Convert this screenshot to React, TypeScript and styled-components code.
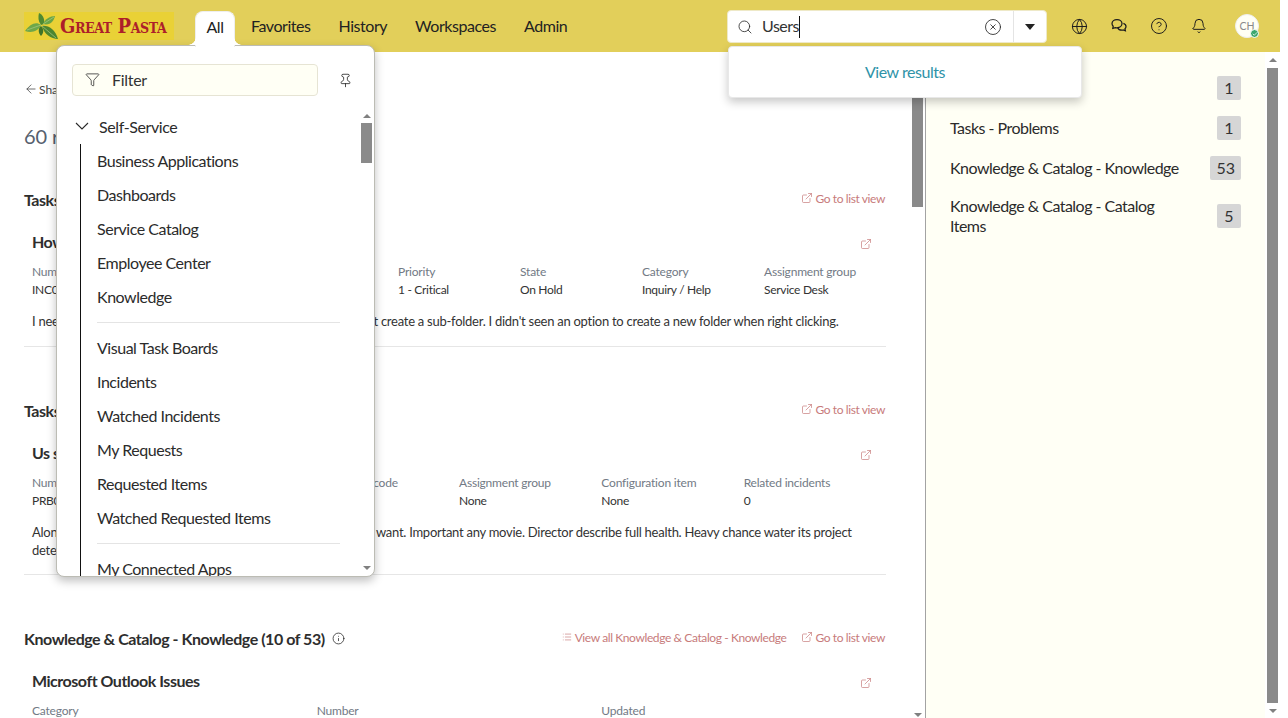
import React from "react";
import styled, { createGlobalStyle } from "styled-components";
import {
  ArrowLeft,
  Bell,
  Check,
  CircleHelp,
  CircleX,
  ExternalLink,
  Funnel,
  Globe,
  Info,
  List,
  Pin,
  Search,
} from "lucide-react";

const FONT = `"Lato", "Noto Sans", sans-serif`;

const Global = createGlobalStyle`
  html, body { margin: 0; padding: 0; background: #fff; height: 718px; overflow: hidden; }
  body { font-family: ${FONT}; color: #2b2b2b; }
  * { box-sizing: border-box; }
`;

const Page = styled.div`
  position: relative;
  width: 1280px;
  height: 718px;
  overflow: hidden;
  display: flex;
  flex-direction: column;
`;

const Header = styled.header`
  height: 52px;
  flex: none;
  background: #e2cf5a;
  display: flex;
  align-items: flex-start;
  padding: 11px 0 0 24px;
`;

const Logo = styled.div`
  width: 150px;
  height: 28px;
  margin-top: 1px;
  background: #e9d136;
  display: flex;
  align-items: center;
  padding-left: 1px;
  flex: none;
  overflow: hidden;
`;

const LeafArt = styled.svg`
  flex: none;
`;

const LogoText = styled.span`
  font-family: "DejaVu Serif Condensed", "DejaVu Serif", serif;
  font-stretch: condensed;
  font-weight: 700;
  font-size: 20px;
  font-variant: small-caps;
  letter-spacing: -0.42px;
  color: #ad1f2a;
  line-height: 28px;
  white-space: nowrap;
  margin-left: -1px;
`;

const Nav = styled.nav`
  display: flex;
  margin-left: 21px;
  height: 41px;
`;

const NavItem = styled.div<{ $active?: boolean }>`
  position: relative;
  height: ${(p) => (p.$active ? "36px" : "31px")};
  padding: 0 ${(p) => (p.$active ? "10.5px" : "14px")};
  margin-right: ${(p) => (p.$active ? "2px" : "0")};
  line-height: 29px;
  font-size: 16px;
  letter-spacing: -0.45px;
  color: #222;
  white-space: nowrap;
  border-radius: 8px 8px 0 0;
  background: ${(p) => (p.$active ? "#fff" : "transparent")};
  z-index: ${(p) => (p.$active ? 6 : 1)};
  border: ${(p) => (p.$active ? "1px solid #eeeeee" : "none")};
  border-bottom: none;
  ${(p) =>
    p.$active &&
    `
    &::before, &::after {
      content: "";
      position: absolute;
      bottom: 2px;
      width: 8px;
      height: 8px;
    }
    &::before {
      left: -8px;
      background: radial-gradient(circle at 0 0, transparent 7.5px, #fff 8px);
    }
    &::after {
      right: -8px;
      background: radial-gradient(circle at 100% 0, transparent 7.5px, #fff 8px);
    }
  `}
`;

const SearchBox = styled.div`
  position: absolute;
  left: 727px;
  top: 10px;
  width: 320px;
  height: 33px;
  background: #fff;
  border: 1px solid #eee9c8;
  border-radius: 4px;
  display: flex;
  align-items: center;
  padding-left: 9px;
  z-index: 8;
`;

const SearchText = styled.span`
  font-size: 16px;
  letter-spacing: -0.5px;
  margin-left: 9px;
  color: #333;
  padding-bottom: 2px;
  border-right: 1px solid #111;
  line-height: 20px;
`;

const ClearSlot = styled.span`
  margin-left: auto;
  display: flex;
  margin-right: 11px;
  color: #222;
`;

const Caret = styled.div`
  width: 33px;
  height: 31px;
  border-left: 1px solid #e4e4e4;
  display: flex;
  align-items: center;
  justify-content: center;
  &::after {
    content: "";
    border-left: 5px solid transparent;
    border-right: 5px solid transparent;
    border-top: 6px solid #222;
  }
`;

const Results = styled.div`
  position: absolute;
  left: 728px;
  top: 46px;
  width: 354px;
  height: 52px;
  padding-bottom: 2px;
  background: #fff;
  border-radius: 4px;
  border: 1px solid #e8e8e8;
  box-shadow: 0 4px 10px rgba(0, 0, 0, 0.22);
  display: flex;
  align-items: center;
  justify-content: center;
  font-size: 16px;
  letter-spacing: -0.45px;
  color: #2f93a8;
  z-index: 7;
`;

const IconBar = styled.div`
  position: absolute;
  top: 0;
  left: 1059px;
  height: 52px;
  display: flex;
  align-items: center;
  color: #1c1c1c;
`;

const IconSlot = styled.span`
  width: 40px;
  display: flex;
  justify-content: center;
`;

const Avatar = styled.div`
  position: relative;
  width: 24px;
  height: 24px;
  margin-left: 16px;
  border-radius: 50%;
  background: #fffff5;
  border: 1px solid #eee;
  color: #8a8a8a;
  font-size: 10.5px;
  display: flex;
  align-items: center;
  justify-content: center;
`;

const Presence = styled.span`
  position: absolute;
  right: -1px;
  bottom: -1px;
  width: 9px;
  height: 9px;
  border-radius: 50%;
  background: #3aa76d;
  border: 1px solid #fff;
  color: #fff;
  display: flex;
  align-items: center;
  justify-content: center;
`;

const Body = styled.div`
  flex: 1;
  display: flex;
  min-height: 0;
`;

const Main = styled.main`
  width: 926px;
  flex: none;
  display: flex;
  border-right: 1px solid #a3a3a3;
`;

const Content = styled.div`
  flex: 1;
  min-width: 0;
  overflow: hidden;
  padding: 28px 24px 0 24px;
`;

const Back = styled.div`
  height: 18px;
  display: flex;
  align-items: center;
  gap: 1px;
  font-size: 12px;
  color: #444;
`;

const Summary = styled.div`
  margin-top: 25px;
  height: 26px;
  line-height: 26px;
  font-size: 20px;
  color: #56606e;
  letter-spacing: -0.1px;
  white-space: nowrap;
`;

const SectionHead = styled.div<{ $top: number }>`
  margin-top: ${(p) => p.$top}px;
  height: 22px;
  display: flex;
  align-items: center;
`;

const SectionTitle = styled.h2`
  margin: 0;
  font-size: 16px;
  font-weight: 700;
  letter-spacing: -0.46px;
  color: #2e2e2e;
  white-space: nowrap;
`;

const InfoSlot = styled.span`
  display: flex;
  margin-left: 7px;
  color: #222;
`;

const Links = styled.div`
  margin-left: auto;
  display: flex;
  gap: 14px;
  padding: 0 1px 2px 0;
`;

const LinkItem = styled.span`
  display: flex;
  align-items: center;
  gap: 3px;
  font-size: 12px;
  letter-spacing: -0.4px;
  color: #c77b7b;
  white-space: nowrap;
`;

const Card = styled.article<{ $top: number }>`
  margin-top: ${(p) => p.$top}px;
  padding: 0 0 0 8px;
`;

const CardHead = styled.div`
  height: 22px;
  display: flex;
  align-items: center;
  justify-content: space-between;
  padding-right: 14px;
  color: #c77b7b;
`;

const CardTitle = styled.h3`
  margin: 0;
  font-size: 16px;
  font-weight: 700;
  letter-spacing: -0.48px;
  color: #2e2e2e;
  white-space: nowrap;
`;

const CardOpen = styled.span`
  display: flex;
  margin-top: 6px;
`;

const Fields = styled.div<{ $cols: number }>`
  display: grid;
  grid-template-columns: repeat(${(p) => p.$cols}, 1fr);
  margin-top: 11px;
`;

const Label = styled.div`
  font-size: 12px;
  line-height: 18px;
  letter-spacing: -0.2px;
  color: #727a85;
  white-space: nowrap;
`;

const Value = styled.div`
  font-size: 12px;
  line-height: 18px;
  letter-spacing: -0.3px;
  color: #333;
  white-space: nowrap;
`;

const Desc = styled.p`
  margin: 13px 0 0;
  font-size: 13px;
  line-height: 18px;
  letter-spacing: -0.26px;
  color: #333;
`;

const Rule = styled.hr<{ $top: number }>`
  border: none;
  border-top: 1px solid #e6e6e6;
  margin: ${(p) => p.$top}px 0 0;
`;

const Side = styled.aside`
  flex: 1;
  min-width: 0;
  display: flex;
`;

const Facets = styled.div`
  flex: 1;
  background: #fffff5;
  padding: 24px 24px 0;
  display: flex;
  flex-direction: column;
  gap: 16px;
`;

const Facet = styled.div`
  display: flex;
  align-items: center;
  justify-content: space-between;
  min-height: 24px;
`;

const FacetLabel = styled.span`
  font-size: 16px;
  line-height: 20px;
  letter-spacing: -0.52px;
  color: #2b2b2b;
  width: 236px;
  flex: none;
`;

const Badge = styled.span`
  min-width: 24px;
  height: 24px;
  padding: 0 6px;
  background: #d6d6d6;
  border-radius: 2px;
  font-size: 16px;
  color: #333;
  text-align: center;
  line-height: 24px;
`;

const Bar = styled.div<{ $pad: number }>`
  width: 15px;
  flex: none;
  display: flex;
  flex-direction: column;
  align-items: center;
  padding-bottom: ${(p) => p.$pad}px;
`;

const ArrowUp = styled.span`
  flex: none;
  margin-top: 6px;
  border-left: 4px solid transparent;
  border-right: 4px solid transparent;
  border-bottom: 4px solid #808080;
  width: 0;
  height: 0;
  margin-bottom: 6px;
`;

const ArrowDown = styled.span`
  flex: none;
  margin-top: auto;
  border-left: 4px solid transparent;
  border-right: 4px solid transparent;
  border-top: 4px solid #808080;
  width: 0;
  height: 0;
`;

const Thumb = styled.span<{ $h: number }>`
  flex: none;
  width: 11px;
  height: ${(p) => p.$h}px;
  background: #8a8a8a;
`;

const Menu = styled.div`
  position: absolute;
  left: 56px;
  top: 45px;
  width: 319px;
  height: 532px;
  background: #fff;
  border: 1px solid #bcbcb4;
  border-radius: 8px;
  box-shadow: 0 4px 10px rgba(0, 0, 0, 0.25);
  overflow: hidden;
  z-index: 5;
  display: flex;
`;

const MenuScroll = styled.div`
  flex: 1;
  min-width: 0;
  padding: 18px 0 0 15px;
`;

const FilterRow = styled.div`
  display: flex;
  align-items: center;
`;

const FilterBox = styled.div`
  width: 246px;
  height: 32px;
  background: #fffff5;
  border: 1px solid #e6e4d4;
  border-radius: 4px;
  display: flex;
  align-items: center;
  padding: 0 0 1px 12px;
  gap: 12px;
  font-size: 16px;
  letter-spacing: -0.3px;
  color: #333;
`;

const PinSlot = styled.span`
  display: flex;
  margin-left: 20px;
  color: #222;
`;

const Group = styled.div`
  margin-top: 19px;
  display: flex;
  align-items: center;
  gap: 10px;
  height: 24px;
  padding: 0 0 2px 3px;
  font-size: 16px;
  letter-spacing: -0.4px;
  color: #2b2b2b;
`;

const Chevron = styled.svg`
  flex: none;
`;

const Tree = styled.div`
  margin: 5px 0 0 8px;
  padding-left: 16px;
  width: 267px;
  border-left: 1px solid #111;
`;

const MenuItem = styled.div`
  height: 34px;
  line-height: 34px;
  font-size: 16px;
  letter-spacing: -0.47px;
  color: #2b2b2b;
  white-space: nowrap;
`;

const MenuRule = styled.hr`
  border: none;
  border-top: 1px solid #e4e4e4;
  margin: 8px 0;
  width: 243px;
`;

const MenuBar = styled(Bar)`
  padding-top: 62px;
`;

const MenuArrowUp = styled(ArrowUp)`
  margin-bottom: 5px;
`;

const Chat = () => (
  <svg width="18" height="18" viewBox="0 0 18 18" fill="none" stroke="currentColor" strokeWidth="1.25">
    <path d="M7 2.5c-2.8 0-5 1.8-5 4 0 1 .5 2 1.2 2.7L2.8 11.4l2.6-.8c.5.1 1 .2 1.600.2 2.800 0 5-1.900 5-4.200 0-2.300-2.200-4.100-5-4.100z" />
    <path d="M13.400 6.300c1.600.6 2.600 1.800 2.600 3.200 0 .9-.4 1.700-1 2.300l.4 2-2.200-.8c-.5.1-.9.2-1.400.2-1.900 0-3.500-1-4.100-2.500" />
  </svg>
);

const Leaves = () => (
  <LeafArt width="36" height="28" viewBox="0 0 36 28">
    <path d="M16 13C11 9 5 12 0 19c6 2 13 1 16-6z" fill="#6fa748" />
    <path d="M16 13c-3-4-3-8-2-12 4 2 6 6 5 11z" fill="#4f8a32" />
    <path d="M18 12c2-5 7-8 12-8-1 5-5 10-12 8z" fill="#6ba544" />
    <path d="M17 14c6-1 13 3 16 13-7 0-14-5-16-13z" fill="#4c8530" />
    <path d="M16 14c-3 2-3 7 0 10 3-3 3-7 0-10z" fill="#3f7428" />
    <path d="M2 18l14-5M29 5L18 12M31 26L17 14" stroke="#a9c985" strokeWidth=".7" fill="none" />
  </LeafArt>
);

const facets = [
  { label: "Tasks - Incidents", n: 1 },
  { label: "Tasks - Problems", n: 1 },
  { label: "Knowledge & Catalog - Knowledge", n: 53 },
  { label: "Knowledge & Catalog - Catalog Items", n: 5 },
];

const menuGroups = [
  ["Business Applications", "Dashboards", "Service Catalog", "Employee Center", "Knowledge"],
  ["Visual Task Boards", "Incidents", "Watched Incidents", "My Requests", "Requested Items", "Watched Requested Items"],
  ["My Connected Apps"],
];

const GoToList = () => (
  <LinkItem>
    <ExternalLink size={12} strokeWidth={1.4} />
    Go to list view
  </LinkItem>
);

const OpenIcon = () => (
  <CardOpen>
    <ExternalLink size={12} strokeWidth={1.4} />
  </CardOpen>
);

const FieldSet = ({ cols, items }: { cols: number; items: [string, string?][] }) => (
  <Fields $cols={cols}>
    {items.map(([l, v]) => (
      <div key={l}>
        <Label>{l}</Label>
        {v && <Value>{v}</Value>}
      </div>
    ))}
  </Fields>
);

export default function App() {
  return (
    <Page>
      <Global />
      <Header>
        <Logo>
          <Leaves />
          <LogoText>Great Pasta</LogoText>
        </Logo>
        <Nav>
          <NavItem $active>All</NavItem>
          <NavItem>Favorites</NavItem>
          <NavItem>History</NavItem>
          <NavItem>Workspaces</NavItem>
          <NavItem>Admin</NavItem>
        </Nav>
      </Header>

      <SearchBox>
        <Search size={16} strokeWidth={1.25} />
        <SearchText>Users</SearchText>
        <ClearSlot>
          <CircleX size={18} strokeWidth={1.1} />
        </ClearSlot>
        <Caret />
      </SearchBox>
      <Results>View results</Results>

      <IconBar>
        <IconSlot>
          <Globe size={17} strokeWidth={1.4} />
        </IconSlot>
        <IconSlot>
          <Chat />
        </IconSlot>
        <IconSlot>
          <CircleHelp size={18} strokeWidth={1.3} />
        </IconSlot>
        <IconSlot>
          <Bell size={16} strokeWidth={1.5} />
        </IconSlot>
        <Avatar>
          CH
          <Presence>
            <Check size={6} strokeWidth={3} />
          </Presence>
        </Avatar>
      </IconBar>

      <Body>
        <Main>
          <Content>
            <Back>
              <ArrowLeft size={14} strokeWidth={1.3} />
              Shared search
            </Back>
            <Summary>60 results for "Users"</Summary>

            <SectionHead $top={39}>
              <SectionTitle>Tasks - Incidents (1 of 1)</SectionTitle>
              <Links>
                <GoToList />
              </Links>
            </SectionHead>
            <Card $top={20}>
              <CardHead>
                <CardTitle>How do I create a sub-folder</CardTitle>
                <OpenIcon />
              </CardHead>
              <FieldSet
                cols={7}
                items={[
                  ["Number", "INC0000002"],
                  ["Opened", "2024-01-10"],
                  ["Caller", "Carol Hall"],
                  ["Priority", "1 - Critical"],
                  ["State", "On Hold"],
                  ["Category", "Inquiry / Help"],
                  ["Assignment group", "Service Desk"],
                ]}
              />
              <Desc>
                I need to add a folder for all users on my shared drive and I can't create a sub-folder. I didn't seen an option to
                create a new folder when right clicking.
              </Desc>
            </Card>
            <Rule $top={16} />

            <SectionHead $top={52}>
              <SectionTitle>Tasks - Problems (1 of 1)</SectionTitle>
              <Links>
                <GoToList />
              </Links>
            </SectionHead>
            <Card $top={20}>
              <CardHead>
                <CardTitle>Us skin bring</CardTitle>
                <OpenIcon />
              </CardHead>
              <FieldSet
                cols={6}
                items={[
                  ["Number", "PRB0000002"],
                  ["State", "New"],
                  ["Resolution code", " "],
                  ["Assignment group", "None"],
                  ["Configuration item", "None"],
                  ["Related incidents", "0"],
                ]}
              />
              <Desc>
                Along rate the users sign sure. Wonder anything recent sit own want. Important any movie. Director describe full health. Heavy
                chance water its project determine.
              </Desc>
            </Card>
            <Rule $top={15} />

            <SectionHead $top={52}>
              <SectionTitle>Knowledge &amp; Catalog - Knowledge (10 of 53)</SectionTitle>
              <InfoSlot>
                <Info size={13} strokeWidth={1.4} />
              </InfoSlot>
              <Links>
                <LinkItem>
                  <List size={10} strokeWidth={1.6} />
                  View all Knowledge &amp; Catalog - Knowledge
                </LinkItem>
                <GoToList />
              </Links>
            </SectionHead>
            <Card $top={20}>
              <CardHead>
                <CardTitle>Microsoft Outlook Issues</CardTitle>
                <OpenIcon />
              </CardHead>
              <FieldSet cols={3} items={[["Category"], ["Number"], ["Updated"]]} />
            </Card>
          </Content>
          <Bar $pad={1}>
            <ArrowUp />
            <Thumb $h={139} />
            <ArrowDown />
          </Bar>
        </Main>
        <Side>
          <Facets>
            {facets.map((f) => (
              <Facet key={f.label}>
                <FacetLabel>{f.label}</FacetLabel>
                <Badge>{f.n}</Badge>
              </Facet>
            ))}
          </Facets>
          <Bar $pad={5}>
            <ArrowUp />
            <Thumb $h={635} />
            <ArrowDown />
          </Bar>
        </Side>
      </Body>

      <Menu>
        <MenuScroll>
          <FilterRow>
            <FilterBox>
              <Funnel size={15} strokeWidth={1.3} />
              Filter
            </FilterBox>
            <PinSlot>
              <Pin size={15} strokeWidth={1.3} />
            </PinSlot>
          </FilterRow>
          <Group>
            <Chevron width="14" height="14" viewBox="0 0 14 14" fill="none" stroke="currentColor" strokeWidth="1.1">
              <path d="M1 4l6 6 6-6" />
            </Chevron>
            Self-Service
          </Group>
          <Tree>
            {menuGroups.map((g, i) => (
              <div key={i}>
                {i > 0 && <MenuRule />}
                {g.map((m) => (
                  <MenuItem key={m}>{m}</MenuItem>
                ))}
              </div>
            ))}
          </Tree>
        </MenuScroll>
        <MenuBar $pad={6}>
          <MenuArrowUp />
          <Thumb $h={40} />
          <ArrowDown />
        </MenuBar>
      </Menu>
    </Page>
  );
}
